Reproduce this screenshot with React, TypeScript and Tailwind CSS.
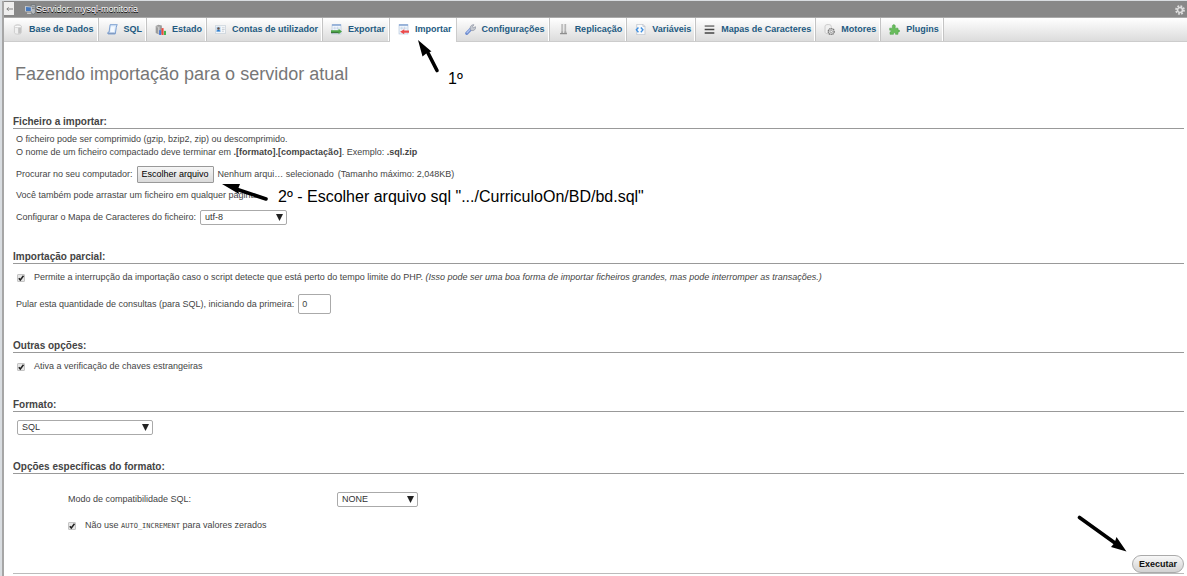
import { useRef, type ReactNode } from "react";

const DatabaseIcon = () => (
  <>
    <path d="M3.500 3.500c0-3 10-3 10 0v9c0 3-10 3-10 0z" fill="#f0f0f0" stroke="#c0c0c0" />
    <path d="M9 5.500v8.500c2.500 0 4-.7 4-1.500V4.500z" fill="#c2c2c2" />
    <ellipse cx="8.500" cy="3.500" rx="5" ry="1.800" fill="#fafafa" stroke="#c8c8c8" />
  </>
);

const SqlIcon = () => (
  <>
    <path d="M4.500 1h10.500c-1 1-1.200 2-1.500 4l-1.500 9.500H2C.5 14.500.5 12 2 12h1z" fill="#dceafa" stroke="#6f97cc" strokeWidth="1.300" />
    <path d="M6 3.500h5.500L10 11.500H5z" fill="#f4f9ff" />
    <path d="M1.500 13.500h10" stroke="#7d98c0" strokeWidth="1.800" />
  </>
);

const StatusIcon = () => (
  <>
    <path d="M1 3l4-2 5 1v12l-5 1-4-2z" fill="#9c9c9c" />
    <path d="M2 4l3 .5V14M6 3.500v10" stroke="#d8d8d8" fill="none" />
    <rect x="6" y="9" width="3" height="7" fill="#4779d8" />
    <rect x="9.500" y="6" width="3" height="10" fill="#ee4a3e" />
    <rect x="13" y="10" width="3" height="6" fill="#45b450" />
  </>
);

const UsersIcon = () => (
  <>
    <rect x=".5" y="2.500" width="15" height="11" fill="#f7f9fb" stroke="#c3ced8" />
    <rect x="2" y="4" width="6" height="7" fill="#a6cdf0" />
    <circle cx="5" cy="6.500" r="1.800" fill="#6c4e3e" />
    <path d="M2 11c.5-3 5.500-3 6 0z" fill="#2978c8" />
    <path d="M10 5.500h4M10 8h4M10 10.500h3" stroke="#b5bec6" />
  </>
);

const SheetShape = () => (
  <>
    <rect x="1.500" y="1" width="13" height="13.500" fill="#f1f6fc" stroke="#b2c4dc" />
    <path d="M1.500 1.500h13" stroke="#7d9fd0" strokeWidth="2" />
    <path d="M3 6h10M5.500 4v4M9.500 4v4" stroke="#c2d1e4" />
  </>
);

const ExportIcon = () => (
  <>
    <SheetShape />
    <path d="M0 9h11V7l5 4-5 4v-2H0z" fill="#4aa345" />
    <path d="M0 12.800h11" stroke="#2d4c33" />
  </>
);

const ImportIcon = () => (
  <>
    <SheetShape />
    <path d="M16 9.500H9v-2l-6 3.700 6 3.700v-2h7z" fill="#ec4a4a" />
  </>
);

const WrenchIcon = () => (
  <>
    <path d="M2.500 13.500l6-6" stroke="#6f8dd0" strokeWidth="4.500" strokeLinecap="round" />
    <path d="M3 12.500l5-5" stroke="#b4c8f2" strokeWidth="1.800" strokeLinecap="round" />
    <path d="M8 8.500c-1.500-4 .5-7.500 5-7.500l-2 3 1 1.500 3.500-1.500c.5 4-3 6.500-6 5.500z" fill="#c4c8d0" stroke="#8d94a3" />
  </>
);

const ReplicationIcon = () => (
  <>
    <path d="M6 0v12M10.500 0v12" stroke="#a8a8a8" strokeWidth="2" />
    <path d="M7.500 0v11M12 0v11" stroke="#dedede" />
    <path d="M3 14h10" stroke="#8d8d8d" strokeWidth="1.800" />
    <path d="M4.500 12h3M9 12h3.500" stroke="#999" strokeWidth="1.800" />
  </>
);

const VariablesIcon = () => (
  <>
    <path d="M2.500.5h9l3 3v12h-12z" fill="#f8fafc" stroke="#b6bcc4" />
    <path d="M11.500.5v3h3" fill="none" stroke="#b6bcc4" />
    <path d="M5 5L2 8.500 5 12M8.500 5l3 3.500-3 3.500" fill="none" stroke="#3f8fe0" strokeWidth="2" />
  </>
);

const CharsetIcon = () => (
  <>
    <path d="M1 3h14" stroke="#777" strokeWidth="2.300" />
    <path d="M1 8h14M1 13h14" stroke="#444" strokeWidth="2.300" />
  </>
);

const EngineIcon = () => (
  <>
    <path d="M1.500 3c0-3 9-3 9 0v9c0 3-9 3-9 0z" fill="#f0f0f0" stroke="#bebebe" />
    <circle cx="10.500" cy="11" r="4.300" fill="#ddd" stroke="#777" strokeWidth="2" strokeDasharray="2 .8" />
    <circle cx="10.500" cy="11" r="1.600" fill="#fff" stroke="#888" />
  </>
);

const PluginIcon = () => (
  <path
    d="M1 6h4.500C4 3 5 1 7 1s3 2 1.500 5H13v3c3-1.500 3.500 3.500 0 2.500V15H9.500c.5-3-3.500-3-3 0H1.500v-3.500C4 12 4 8.500 1 9z"
    fill="#69bd5c"
    stroke="#4a9f45"
    strokeWidth=".8"
  />
);

type Tab = { label: string; icon: ReactNode; active?: boolean };

const tabs: Tab[] = [
  { label: "Base de Dados", icon: <DatabaseIcon /> },
  { label: "SQL", icon: <SqlIcon /> },
  { label: "Estado", icon: <StatusIcon /> },
  { label: "Contas de utilizador", icon: <UsersIcon /> },
  { label: "Exportar", icon: <ExportIcon /> },
  { label: "Importar", icon: <ImportIcon />, active: true },
  { label: "Configurações", icon: <WrenchIcon /> },
  { label: "Replicação", icon: <ReplicationIcon /> },
  { label: "Variáveis", icon: <VariablesIcon /> },
  { label: "Mapas de Caracteres", icon: <CharsetIcon /> },
  { label: "Motores", icon: <EngineIcon /> },
  { label: "Plugins", icon: <PluginIcon /> },
];

function Section({ title, children }: { title: string; children: ReactNode }) {
  return (
    <section className="mt-[25px]">
      <h3 className="border-b border-[#999] text-[10px] leading-[13px] font-bold text-[#444]">{title}</h3>
      <div className="pl-[3px]">{children}</div>
    </section>
  );
}

function Select({ id, options, className }: { id: string; options: string[]; className: string }) {
  return (
    <span className={`relative inline-flex ${className}`}>
      <select
        id={id}
        className="w-full appearance-none rounded-[2px] border border-[#aaa] bg-white pl-1 text-[9px] leading-[13px] text-[#333]"
      >
        {options.map((option) => (
          <option key={option}>{option}</option>
        ))}
      </select>
      <svg viewBox="0 0 8 8" className="pointer-events-none absolute top-1 right-1 size-[7px]">
        <path d="M0 0h8L4 8z" fill="#222" />
      </svg>
    </span>
  );
}

function Checkbox({ id, children }: { id: string; children: ReactNode }) {
  return (
    <div className="flex items-center gap-[9px] pl-px">
      <span className="relative size-2 shrink-0">
        <input
          id={id}
          type="checkbox"
          defaultChecked
          className="peer block size-2 appearance-none rounded-[1px] border border-[#c4c4c4] bg-[#e6e6e6]"
        />
        <svg viewBox="0 0 8 8" className="pointer-events-none absolute inset-0 hidden size-2 peer-checked:block">
          <path d="M1.800 4.200L3.300 6 6.500 1.800" fill="none" stroke="#222" strokeWidth="1.500" />
        </svg>
      </span>
      <label htmlFor={id}>{children}</label>
    </div>
  );
}

export default function App() {
  const fileInput = useRef<HTMLInputElement>(null);

  return (
    <div className="relative flex min-h-screen overflow-hidden border-t border-l-2 border-[#d9dde1] bg-white font-['Liberation_Sans',Arial,sans-serif] text-[9px] leading-[13px] text-[#444]">
      <div className="min-w-0 flex-1 border-l-2 border-[#a6a6a6]">
        <header className="flex h-[17px] items-center border-b border-[#aaa] bg-[#888] pt-px pr-[2px]">
          <button
            type="button"
            aria-label="Ocultar painel"
            className="flex h-[13px] w-[10px] items-center justify-center self-start bg-[#eee]"
          >
            <svg viewBox="0 0 8 6" className="h-[6px] w-[7px]">
              <path d="M8 3H1M3 1L1 3l2 2" fill="none" stroke="#777" />
            </svg>
          </button>
          <svg viewBox="0 0 16 16" className="ml-[11px] size-[11px]">
            <path d="M9 1h6v12l-3 2-3-2z" fill="#b7babd" stroke="#626a70" />
            <path d="M10 4h4M10 6.500h4" stroke="#666" />
            <path d="M0 3l10 1v7L0 11z" fill="#c3ccd6" />
            <path d="M1.500 4.500l7 .5v5h-7z" fill="#4678bd" />
            <path d="M3 13.500h6" stroke="#ccc" strokeWidth="2" />
          </svg>
          <a href="#servidor" className="text-white [text-shadow:0_1px_0_#000]">
            Servidor: mysql-monitoria
          </a>
          <button type="button" aria-label="Definições da página" className="ml-auto">
            <svg viewBox="0 0 16 16" className="block size-[10px]">
              <circle cx="8" cy="8" r="6.300" fill="none" stroke="#ddd" strokeWidth="3" strokeDasharray="2.800 2.150" />
              <circle cx="8" cy="8" r="4" fill="#888" stroke="#ddd" strokeWidth="2.600" />
            </svg>
          </button>
        </header>

        <nav className="flex h-6 border-b border-[#ccc] bg-linear-to-b from-white to-[#dcdcdc]">
          {tabs.map((tab) => (
            <a
              key={tab.label}
              href="#"
              className={`flex items-center gap-[6px] border-r pr-1 pl-2 font-bold whitespace-nowrap text-[#235a81] shadow-[inset_-1px_0_0_#fff] ${
                tab.active ? "-mb-px border-[#ccc] bg-white pb-px" : "border-[#c4c4c4]"
              }`}
            >
              <svg viewBox="0 0 16 16" className="size-[11px]">
                {tab.icon}
              </svg>
              {tab.label}
            </a>
          ))}
        </nav>

        <main className="pt-5 pr-[3px] pl-[9px]">
          <h2 className="mb-[29px] pl-[2px] text-[18px] leading-6 text-[#777]">Fazendo importação para o servidor atual</h2>

          <Section title="Ficheiro a importar:">
            <p className="pt-1">O ficheiro pode ser comprimido (gzip, bzip2, zip) ou descomprimido.</p>
            <p>
              O nome de um ficheiro compactado deve terminar em <b>.[formato].[compactação]</b>. Exemplo: <b>.sql.zip</b>
            </p>
            <div className="mt-[7px] flex items-center gap-1">
              <label htmlFor="arquivo">Procurar no seu computador:</label>
              <input ref={fileInput} id="arquivo" type="file" className="hidden" />
              <button
                type="button"
                onClick={() => fileInput.current?.click()}
                className="rounded-[1px] border border-[#999] bg-linear-to-b from-[#f6f6f6] to-[#dadada] px-1 leading-[15px] text-black"
              >
                Escolher arquivo
              </button>
              <span>Nenhum arqui… selecionado</span>
              <span>(Tamanho máximo: 2,048KB)</span>
            </div>
            <p className="mt-[6px]">Você também pode arrastar um ficheiro em qualquer página.</p>
            <div className="mt-2 flex items-center gap-1">
              <label htmlFor="charset">Configurar o Mapa de Caracteres do ficheiro:</label>
              <Select id="charset" options={["utf-8", "iso-8859-1"]} className="w-[87px]" />
            </div>
          </Section>

          <Section title="Importação parcial:">
            <div className="pt-[7px]">
              <Checkbox id="interrupcao">
                Permite a interrupção da importação caso o script detecte que está perto do tempo limite do PHP.{" "}
                <i>(Isso pode ser uma boa forma de importar ficheiros grandes, mas pode interromper as transações.)</i>
              </Checkbox>
            </div>
            <div className="mt-[10px] flex items-center gap-1">
              <label htmlFor="pular">Pular esta quantidade de consultas (para SQL), iniciando da primeira:</label>
              <input
                id="pular"
                type="text"
                defaultValue="0"
                className="h-5 w-[33px] rounded-[2px] border border-[#aaa] bg-white px-[3px] text-[9px]"
              />
            </div>
          </Section>

          <Section title="Outras opções:">
            <div className="pt-[7px]">
              <Checkbox id="chaves">Ativa a verificação de chaves estrangeiras</Checkbox>
            </div>
          </Section>

          <Section title="Formato:">
            <div className="flex pt-2 pl-px">
              <Select id="formato" options={["SQL", "CSV", "XML"]} className="w-[136px]" />
            </div>
          </Section>

          <Section title="Opções específicas do formato:">
            <div className="pt-[18px] pl-[51px]">
              <div className="flex items-center pl-px">
                <label htmlFor="modo" className="w-[269px]">
                  Modo de compatibilidade SQL:
                </label>
                <Select id="modo" options={["NONE", "ANSI", "DB2"]} className="w-[81px]" />
              </div>
              <div className="mt-3">
                <Checkbox id="zerados">
                  Não use <code className="font-['DejaVu_Sans_Mono',monospace] text-[7px]">AUTO_INCREMENT</code> para valores
                  zerados
                </Checkbox>
              </div>
            </div>
          </Section>

          <div className="mt-[22px] flex justify-end border-b border-[#bbb]">
            <button
              type="button"
              className="rounded-[9px] border border-[#aaa] bg-linear-to-b from-[#f8f8f8] to-[#d2d2d2] px-[6px] leading-4 font-bold text-[#111]"
            >
              Executar
            </button>
          </div>
        </main>
      </div>

      <svg viewBox="0 0 22 33" className="pointer-events-none absolute top-[39px] left-[416px] h-[33px] w-[22px]">
        <path d="M19 30.500L9 11" stroke="#000" strokeWidth="3.600" strokeLinecap="round" />
        <path d="M0 0l13.500 11.500-4 1-5 4z" />
      </svg>
      <span className="pointer-events-none absolute top-[68px] left-[446px] text-[16px] leading-5 text-black">1º</span>

      <svg viewBox="0 0 48 20" className="pointer-events-none absolute top-[182px] left-[220px] h-5 w-12">
        <path d="M44 16L14 6" stroke="#000" strokeWidth="3.600" strokeLinecap="round" />
        <path d="M0 1l18 0-2 5 1 5z" />
      </svg>
      <span className="pointer-events-none absolute top-[186px] left-[276px] text-[16px] leading-5 whitespace-nowrap text-black">
        2º - Escolher arquivo sql ".../CurriculoOn/BD/bd.sql"
      </span>

      <svg viewBox="0 0 50 37" className="pointer-events-none absolute top-[514px] right-[60px] h-[37px] w-[50px]">
        <path d="M2.500 2.500L38 28" stroke="#000" strokeWidth="3.600" strokeLinecap="round" />
        <path d="M49.500 36.500L34 32l3.500-4 2-6z" />
      </svg>
    </div>
  );
}
